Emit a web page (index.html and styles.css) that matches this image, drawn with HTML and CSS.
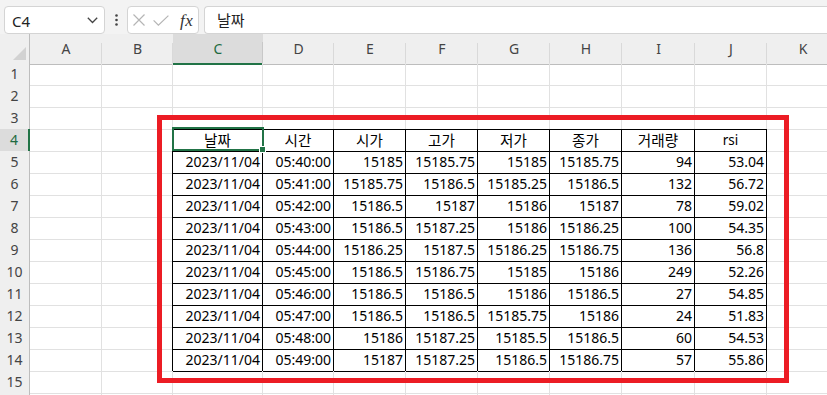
FILE: index.html
```html
<!DOCTYPE html>
<html lang="ko">
<head>
<meta charset="utf-8">
<title>Sheet</title>
<link rel="stylesheet" href="styles.css">
</head>
<body>
<div class="app">
  <div class="fbar">
    <div class="namebox">
      <span class="ref">C4</span>
      <svg class="chev" width="11" height="7" viewBox="0 0 11 7"><polyline points="0.8,0.8 5.5,5.5 10.2,0.8" fill="none" stroke="#444" stroke-width="1.3"/></svg>
    </div>
    <div class="more">
      <svg width="3" height="12" viewBox="0 0 3 12"><circle cx="1.5" cy="1.5" r="1.3" fill="#444"/><circle cx="1.5" cy="6" r="1.3" fill="#444"/><circle cx="1.5" cy="10.5" r="1.3" fill="#444"/></svg>
    </div>
    <div class="btns">
      <svg class="ic-x" width="12" height="12" viewBox="0 0 12 12"><path d="M0.5 0.5 L11.5 11.5 M11.5 0.5 L0.5 11.5" stroke="#b5b5b5" stroke-width="1.2" fill="none"/></svg>
      <svg class="ic-ok" width="16" height="11" viewBox="0 0 16 11"><polyline points="0.6,5.4 5.4,10.2 15.4,0.6" stroke="#b5b5b5" stroke-width="1.2" fill="none"/></svg>
      <span class="fx">fx</span>
    </div>
    <div class="finput">날짜</div>
  </div>

  <div class="sheet">
    <div class="row hdr">
      <div class="corner"><span class="tri"></span></div>
      <div class="ch">A</div><div class="ch">B</div><div class="ch sel">C</div><div class="ch">D</div><div class="ch">E</div><div class="ch">F</div><div class="ch">G</div><div class="ch">H</div><div class="ch">I</div><div class="ch">J</div><div class="ch">K</div>
    </div>
    <div class="row"><div class="rh">1</div><div class="c"></div><div class="c"></div><div class="c"></div><div class="c"></div><div class="c"></div><div class="c"></div><div class="c"></div><div class="c"></div><div class="c"></div><div class="c"></div><div class="c"></div></div>
    <div class="row"><div class="rh">2</div><div class="c"></div><div class="c"></div><div class="c"></div><div class="c"></div><div class="c"></div><div class="c"></div><div class="c"></div><div class="c"></div><div class="c"></div><div class="c"></div><div class="c"></div></div>
    <div class="row"><div class="rh">3</div><div class="c"></div><div class="c"></div><div class="c tt"></div><div class="c tt"></div><div class="c tt"></div><div class="c tt"></div><div class="c tt"></div><div class="c tt"></div><div class="c tt"></div><div class="c tt"></div><div class="c"></div></div>
    <div class="row"><div class="rh sel">4</div><div class="c"></div><div class="c tl"></div><div class="c t m ko">날짜</div><div class="c t m ko">시간</div><div class="c t m ko">시가</div><div class="c t m ko">고가</div><div class="c t m ko">저가</div><div class="c t m ko">종가</div><div class="c t m ko">거래량</div><div class="c t m lat">rsi</div><div class="c"></div></div>
    <div class="row"><div class="rh">5</div><div class="c"></div><div class="c tl"></div><div class="c t r">2023/11/04</div><div class="c t r">05:40:00</div><div class="c t r">15185</div><div class="c t r">15185.75</div><div class="c t r">15185</div><div class="c t r">15185.75</div><div class="c t r">94</div><div class="c t r">53.04</div><div class="c"></div></div>
    <div class="row"><div class="rh">6</div><div class="c"></div><div class="c tl"></div><div class="c t r">2023/11/04</div><div class="c t r">05:41:00</div><div class="c t r">15185.75</div><div class="c t r">15186.5</div><div class="c t r">15185.25</div><div class="c t r">15186.5</div><div class="c t r">132</div><div class="c t r">56.72</div><div class="c"></div></div>
    <div class="row"><div class="rh">7</div><div class="c"></div><div class="c tl"></div><div class="c t r">2023/11/04</div><div class="c t r">05:42:00</div><div class="c t r">15186.5</div><div class="c t r">15187</div><div class="c t r">15186</div><div class="c t r">15187</div><div class="c t r">78</div><div class="c t r">59.02</div><div class="c"></div></div>
    <div class="row"><div class="rh">8</div><div class="c"></div><div class="c tl"></div><div class="c t r">2023/11/04</div><div class="c t r">05:43:00</div><div class="c t r">15186.5</div><div class="c t r">15187.25</div><div class="c t r">15186</div><div class="c t r">15186.25</div><div class="c t r">100</div><div class="c t r">54.35</div><div class="c"></div></div>
    <div class="row"><div class="rh">9</div><div class="c"></div><div class="c tl"></div><div class="c t r">2023/11/04</div><div class="c t r">05:44:00</div><div class="c t r">15186.25</div><div class="c t r">15187.5</div><div class="c t r">15186.25</div><div class="c t r">15186.75</div><div class="c t r">136</div><div class="c t r">56.8</div><div class="c"></div></div>
    <div class="row"><div class="rh">10</div><div class="c"></div><div class="c tl"></div><div class="c t r">2023/11/04</div><div class="c t r">05:45:00</div><div class="c t r">15186.5</div><div class="c t r">15186.75</div><div class="c t r">15185</div><div class="c t r">15186</div><div class="c t r">249</div><div class="c t r">52.26</div><div class="c"></div></div>
    <div class="row"><div class="rh">11</div><div class="c"></div><div class="c tl"></div><div class="c t r">2023/11/04</div><div class="c t r">05:46:00</div><div class="c t r">15186.5</div><div class="c t r">15186.5</div><div class="c t r">15186</div><div class="c t r">15186.5</div><div class="c t r">27</div><div class="c t r">54.85</div><div class="c"></div></div>
    <div class="row"><div class="rh">12</div><div class="c"></div><div class="c tl"></div><div class="c t r">2023/11/04</div><div class="c t r">05:47:00</div><div class="c t r">15186.5</div><div class="c t r">15186.5</div><div class="c t r">15185.75</div><div class="c t r">15186</div><div class="c t r">24</div><div class="c t r">51.83</div><div class="c"></div></div>
    <div class="row"><div class="rh">13</div><div class="c"></div><div class="c tl"></div><div class="c t r">2023/11/04</div><div class="c t r">05:48:00</div><div class="c t r">15186</div><div class="c t r">15187.25</div><div class="c t r">15185.5</div><div class="c t r">15186.5</div><div class="c t r">60</div><div class="c t r">54.53</div><div class="c"></div></div>
    <div class="row"><div class="rh">14</div><div class="c"></div><div class="c tl"></div><div class="c t r">2023/11/04</div><div class="c t r">05:49:00</div><div class="c t r">15187</div><div class="c t r">15187.25</div><div class="c t r">15186.5</div><div class="c t r">15186.75</div><div class="c t r">57</div><div class="c t r">55.86</div><div class="c"></div></div>
    <div class="row"><div class="rh">15</div><div class="c"></div><div class="c"></div><div class="c"></div><div class="c"></div><div class="c"></div><div class="c"></div><div class="c"></div><div class="c"></div><div class="c"></div><div class="c"></div><div class="c"></div></div>
    <div class="row"><div class="rh"></div><div class="c"></div><div class="c"></div><div class="c"></div><div class="c"></div><div class="c"></div><div class="c"></div><div class="c"></div><div class="c"></div><div class="c"></div><div class="c"></div><div class="c"></div></div>
  </div>

  <div class="active"><span class="handle"></span></div>
  <div class="redbox"></div>
</div>
</body>
</html>
```

FILE: styles.css
```css
html, body {
  margin: 0;
  padding: 0;
  background: #fff;
  overflow: hidden;
}
.app {
  position: relative;
  width: 827px;
  height: 395px;
  overflow: hidden;
  font-family: "Noto Sans", "Noto Sans CJK KR", sans-serif;
}
.fbar {
  height: 34px;
  box-sizing: border-box;
  background: #f3f3f3;
  padding: 6px 0 0 4px;
  display: flex;
  align-items: flex-start;
}
.namebox {
  width: 101px;
  height: 28px;
  box-sizing: border-box;
  background: #fff;
  border: 1px solid #d4d4d4;
  border-radius: 4px;
  display: flex;
  align-items: center;
  justify-content: space-between;
  padding: 0 6px 0 7px;
}
.ref {
  font-size: 15px;
  color: #222;
  line-height: 1;
  position: relative;
  top: 1px;
}
.more {
  width: 22px;
  height: 28px;
  display: flex;
  align-items: center;
  justify-content: center;
}
.btns {
  width: 72px;
  height: 28px;
  box-sizing: border-box;
  background: #fff;
  border: 1px solid #d4d4d4;
  border-radius: 4px;
  display: flex;
  align-items: center;
  padding-left: 5px;
}
.ic-x { margin-right: 8px; }
.ic-ok { margin-right: 11px; }
.fx {
  font-family: "Liberation Serif", "DejaVu Serif", serif;
  font-style: italic;
  font-size: 17px;
  color: #333;
  line-height: 1;
  letter-spacing: 0.5px;
}
.finput {
  flex: 1;
  margin-left: 5px;
  height: 28px;
  box-sizing: border-box;
  background: #fff;
  border: 1px solid #d4d4d4;
  border-right: none;
  border-radius: 4px 0 0 4px;
  padding-left: 12px;
  font-family: "Noto Sans CJK KR", sans-serif;
  font-size: 15px;
  line-height: 25px;
  color: #222;
}

.sheet {
  display: flex;
  flex-direction: column;
}
.row {
  display: grid;
  grid-template-columns: 30px 72px 71px 90px 71px 72px 72px 72px 72px 73px 72px 72px;
  height: 22px;
}
.row.hdr { height: 29px; }

.corner {
  background: #efefef;
  border-right: 1px solid #bdbdbd;
  border-bottom: 1px solid #bdbdbd;
  box-sizing: border-box;
  display: flex;
  justify-content: flex-end;
  align-items: flex-end;
  padding: 0 3px 4px 0;
}
.tri {
  width: 0;
  height: 0;
  border-left: 13px solid transparent;
  border-bottom: 13px solid #d2d2d2;
}
.ch {
  background: linear-gradient(#d9d9d9, #d9d9d9) right bottom / 1px 21px no-repeat, #efefef;
  border-bottom: 1px solid #bdbdbd;
  box-sizing: border-box;
  text-align: center;
  font-size: 14px;
  line-height: 29px;
  color: #444;
}
.ch.sel {
  background: linear-gradient(#c8c8c8, #c8c8c8) right bottom / 1px 21px no-repeat, #dcdcdc;
  border-bottom: 2px solid #217346;
  color: #1e6b41;
}
.rh {
  background: #efefef;
  border-right: 1px solid #bdbdbd;
  border-bottom: 1px solid #dadada;
  box-sizing: border-box;
  text-align: center;
  font-size: 14px;
  line-height: 22px;
  color: #444;
}
.rh.sel {
  background: #dcdcdc;
  border-right: 2px solid #217346;
  color: #1e6b41;
}
.c {
  border-right: 1px solid #e1e1e1;
  border-bottom: 1px solid #e1e1e1;
  box-sizing: border-box;
  font-family: "Noto Sans", "Noto Sans CJK KR", sans-serif;
  font-size: 14px;
  line-height: 22px;
  color: #000;
  white-space: nowrap;
  overflow: hidden;
}
.c.tt { border-bottom-color: #000; }
.c.tl { border-right-color: #000; }
.c.t {
  border-right-color: #000;
  border-bottom-color: #000;
}
.c.r {
  text-align: right;
  padding-right: 2px;
}
.c.m { text-align: center; }
.c.ko {
  font-family: "Noto Sans CJK KR", sans-serif;
  font-size: 14.6px;
}
.c.lat {
  font-family: "Noto Sans", sans-serif;
  font-size: 13.5px;
}

.active {
  position: absolute;
  left: 172px;
  top: 127px;
  width: 92px;
  height: 24px;
  box-sizing: border-box;
  border: 2px solid #217346;
}
.handle {
  position: absolute;
  right: -4px;
  bottom: -4px;
  width: 5px;
  height: 5px;
  background: #217346;
  border: 1px solid #fff;
}
.redbox {
  position: absolute;
  left: 157px;
  top: 115px;
  width: 632px;
  height: 268px;
  box-sizing: border-box;
  border: 5px solid #ec1c24;
}
```
